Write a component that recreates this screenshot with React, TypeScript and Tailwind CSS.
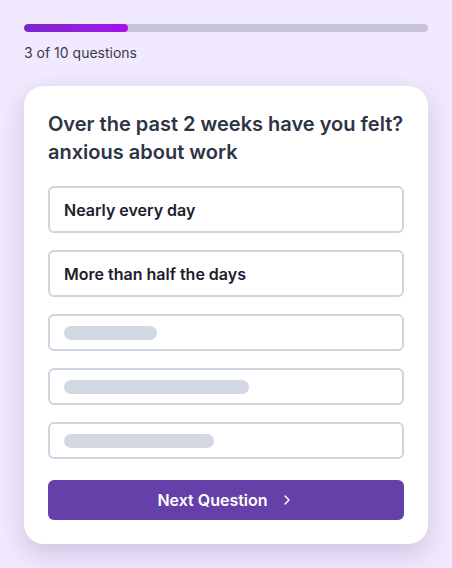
import React from "react";

export default function App() {
  const font = { fontFamily: "Inter, 'Noto Sans', sans-serif" };
  return (
    <div className="min-h-[568px] w-full bg-[#f1e9fd] px-6 pt-6 pb-6" style={font}>
      <div className="h-2 w-full rounded-full bg-[#c8c5d8] overflow-hidden">
        <div className="h-2 w-[104px] rounded-full bg-gradient-to-r from-[#7a27cc] to-[#a80ded]" />
      </div>
      <div className="mt-[11px] text-sm leading-5 text-[#3b3a4a]">3 of 10 questions</div>
      <div className="mt-[23px] rounded-[20px] bg-white px-6 pt-6 pb-6 shadow-[0_10px_26px_rgba(70,50,120,0.2)]">
        <h2 className="text-xl leading-7 font-semibold text-[#2d3446]">
          Over the past 2 weeks have you felt? anxious about work
        </h2>
        <div className="mt-5 flex flex-col gap-[17px]">
          <div className="flex h-[47px] items-center rounded-md border-2 border-[#cdd5e1] px-[14px] text-base font-semibold text-[#1b202c]">
            Nearly every day
          </div>
          <div className="flex h-[47px] items-center rounded-md border-2 border-[#cdd5e1] px-[14px] text-base font-semibold text-[#1b202c]">
            More than half the days
          </div>
          <div className="flex h-[37px] items-center rounded-md border-2 border-[#cdd5e1] px-[14px]">
            <div className="h-[14px] w-[93px] rounded-full bg-[#d2d9e2]" />
          </div>
          <div className="flex h-[37px] items-center rounded-md border-2 border-[#cdd5e1] px-[14px]">
            <div className="h-[14px] w-[185px] rounded-full bg-[#d2d9e2]" />
          </div>
          <div className="flex h-[37px] items-center rounded-md border-2 border-[#cdd5e1] px-[14px]">
            <div className="h-[14px] w-[150px] rounded-full bg-[#d2d9e2]" />
          </div>
        </div>
        <button className="mt-[21px] flex h-10 w-full items-center justify-center gap-[11px] rounded-md bg-[#6440a8] text-base font-semibold text-white">
          <span>Next Question</span>
          <svg width="16" height="16" viewBox="0 0 24 24" fill="none" stroke="currentColor" strokeWidth="2.2" strokeLinecap="round" strokeLinejoin="round">
            <path d="M9 6l6 6-6 6" />
          </svg>
        </button>
      </div>
    </div>
  );
}
